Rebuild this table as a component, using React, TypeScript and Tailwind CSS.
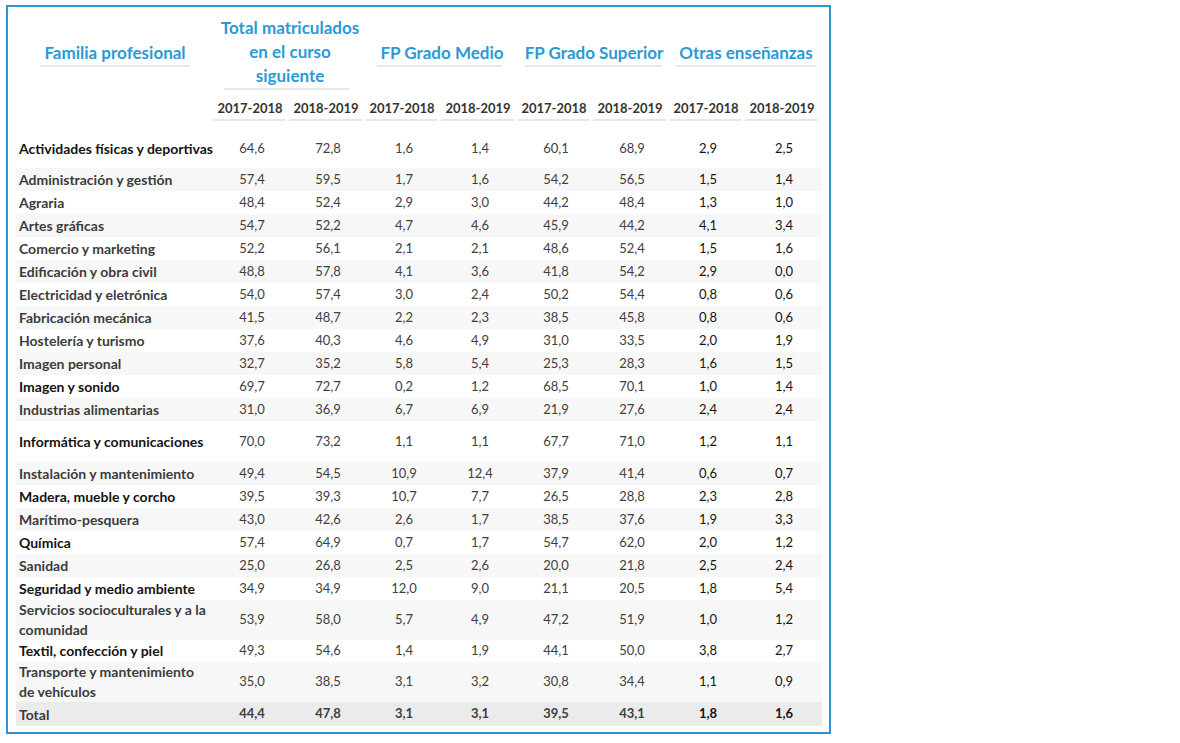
const grid = "grid grid-cols-[198px_repeat(8,76px)]";

type Row = {
  label: string[];
  dark?: boolean;
  values: string[];
  h: string;
  bg: string;
};

const data: [string[], boolean, string[], string][] = [
  [["Actividades físicas y deportivas"], true, ["64,6", "72,8", "1,6", "1,4", "60,1", "68,9", "2,9", "2,5"], "h-[38px]"],
  [["Administración y gestión"], false, ["57,4", "59,5", "1,7", "1,6", "54,2", "56,5", "1,5", "1,4"], "h-[23px]"],
  [["Agraria"], false, ["48,4", "52,4", "2,9", "3,0", "44,2", "48,4", "1,3", "1,0"], "h-[23px]"],
  [["Artes gráficas"], false, ["54,7", "52,2", "4,7", "4,6", "45,9", "44,2", "4,1", "3,4"], "h-[23px]"],
  [["Comercio y marketing"], false, ["52,2", "56,1", "2,1", "2,1", "48,6", "52,4", "1,5", "1,6"], "h-[23px]"],
  [["Edificación y obra civil"], false, ["48,8", "57,8", "4,1", "3,6", "41,8", "54,2", "2,9", "0,0"], "h-[23px]"],
  [["Electricidad y eletrónica"], false, ["54,0", "57,4", "3,0", "2,4", "50,2", "54,4", "0,8", "0,6"], "h-[23px]"],
  [["Fabricación mecánica"], false, ["41,5", "48,7", "2,2", "2,3", "38,5", "45,8", "0,8", "0,6"], "h-[23px]"],
  [["Hostelería y turismo"], false, ["37,6", "40,3", "4,6", "4,9", "31,0", "33,5", "2,0", "1,9"], "h-[23px]"],
  [["Imagen personal"], false, ["32,7", "35,2", "5,8", "5,4", "25,3", "28,3", "1,6", "1,5"], "h-[23px]"],
  [["Imagen y sonido"], true, ["69,7", "72,7", "0,2", "1,2", "68,5", "70,1", "1,0", "1,4"], "h-[23px]"],
  [["Industrias alimentarias"], false, ["31,0", "36,9", "6,7", "6,9", "21,9", "27,6", "2,4", "2,4"], "h-[23px]"],
  [["Informática y comunicaciones"], true, ["70,0", "73,2", "1,1", "1,1", "67,7", "71,0", "1,2", "1,1"], "h-[41px]"],
  [["Instalación y mantenimiento"], false, ["49,4", "54,5", "10,9", "12,4", "37,9", "41,4", "0,6", "0,7"], "h-[23px]"],
  [["Madera, mueble y corcho"], true, ["39,5", "39,3", "10,7", "7,7", "26,5", "28,8", "2,3", "2,8"], "h-[23px]"],
  [["Marítimo-pesquera"], false, ["43,0", "42,6", "2,6", "1,7", "38,5", "37,6", "1,9", "3,3"], "h-[23px]"],
  [["Química"], true, ["57,4", "64,9", "0,7", "1,7", "54,7", "62,0", "2,0", "1,2"], "h-[23px]"],
  [["Sanidad"], false, ["25,0", "26,8", "2,5", "2,6", "20,0", "21,8", "2,5", "2,4"], "h-[23px]"],
  [["Seguridad y medio ambiente"], true, ["34,9", "34,9", "12,0", "9,0", "21,1", "20,5", "1,8", "5,4"], "h-[23px]"],
  [["Servicios socioculturales y a la", "comunidad"], false, ["53,9", "58,0", "5,7", "4,9", "47,2", "51,9", "1,0", "1,2"], "h-[40px]"],
  [["Textil, confección y piel"], true, ["49,3", "54,6", "1,4", "1,9", "44,1", "50,0", "3,8", "2,7"], "h-[22px]"],
  [["Transporte y mantenimiento", "de vehículos"], false, ["35,0", "38,5", "3,1", "3,2", "30,8", "34,4", "1,1", "0,9"], "h-[40px]"],
];

const rows: Row[] = data.map(([label, dark, values, h], i) => ({
  label,
  dark,
  values,
  h,
  bg: i % 2 === 1 ? "bg-[#f7f7f7]" : "bg-white",
}));

const years = ["2017-2018", "2018-2019", "2017-2018", "2018-2019", "2017-2018", "2018-2019", "2017-2018", "2018-2019"];

function DataRow({ row }: { row: Row }) {
  return (
    <div className={`${grid} ${row.h} ${row.bg} items-center`}>
      <div
        className={`pl-[3px] text-[14px] font-bold leading-[20px] whitespace-nowrap ${row.dark ? "text-[#141414]" : "text-[#3c3c3c]"}`}
      >
        {row.label.map((l) => (
          <div key={l}>{l}</div>
        ))}
      </div>
      {row.values.map((v, j) => (
        <div key={j} className={`text-center ${j >= 6 ? "text-[#141414]" : "text-[#404040]"}`}>
          {v}
        </div>
      ))}
    </div>
  );
}

export default function App() {
  return (
    <div className="min-h-screen bg-white pl-[6px] pt-[5px] font-['Lato','Liberation_Sans',sans-serif] text-[13px]">
      <div className="w-[825px] border-2 border-[#2b95d3] pl-[8px] pr-[7px] pb-[6px]">
        {/* group headers */}
        <div className={`${grid} items-start pt-[9px] text-[17px] font-bold leading-[24px] text-[#2a9ad6]`}>
          <div className="mt-[25px]">
            <div className="text-center">Familia profesional</div>
            <div className="mx-[24px] h-[2px] bg-[#e8e8e8]" />
          </div>
          <div className="col-span-2">
            <div className="text-center">
              Total matriculados
              <br />
              en el curso
              <br />
              siguiente
            </div>
            <div className="ml-[10px] mr-[17px] h-[2px] bg-[#e8e8e8]" />
          </div>
          <div className="col-span-2 mt-[25px]">
            <div className="text-center">FP Grado Medio</div>
            <div className="ml-[11px] mr-[16px] h-[2px] bg-[#e8e8e8]" />
          </div>
          <div className="col-span-2 mt-[25px]">
            <div className="text-center">FP Grado Superior</div>
            <div className="ml-[7px] mr-[8px] h-[2px] bg-[#e8e8e8]" />
          </div>
          <div className="col-span-2 mt-[25px]">
            <div className="text-center">Otras enseñanzas</div>
            <div className="mx-[6px] h-[2px] bg-[#e8e8e8]" />
          </div>
        </div>

        {/* year headers */}
        <div className={`${grid} mt-[7px] font-bold text-[#333333]`}>
          <div />
          {years.map((y, i) => (
            <div key={i}>
              <div className="h-[22px] pr-1 text-center leading-[22px]">{y}</div>
              <div className="-ml-px mr-1 h-[2px] bg-[#e8e8e8]" />
            </div>
          ))}
        </div>

        {/* body */}
        <div className="mt-[9px]">
          {rows.map((r) => (
            <DataRow key={r.label[0]} row={r} />
          ))}
          <div className={`${grid} h-[24px] items-center bg-[#ebebeb] font-bold`}>
            <div className="pl-[3px] text-[14px] text-[#3c3c3c]">Total</div>
            {["44,4", "47,8", "3,1", "3,1", "39,5", "43,1", "1,8", "1,6"].map((v, j) => (
              <div key={j} className={`text-center ${j >= 6 ? "text-[#141414]" : "text-[#404040]"}`}>
                {v}
              </div>
            ))}
          </div>
        </div>
      </div>
    </div>
  );
}
